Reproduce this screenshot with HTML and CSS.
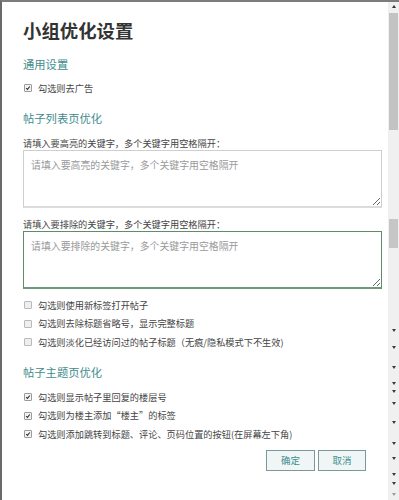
FILE: index.html
```html
<!DOCTYPE html>
<html lang="zh-CN">
<head>
<meta charset="utf-8">
<title>小组优化设置</title>
<link rel="stylesheet" href="styles.css">
</head>
<body>
<div class="frame">
  <div class="dialog">
    <h1 class="title">小组优化设置</h1>

    <h2 class="section s-general">通用设置</h2>
    <label class="check first-general"><span class="box on"><svg viewBox="0 0 8 8"><path d="M1.6 4.2 L3.3 5.9 L6.4 2" /></svg></span>勾选则去广告</label>

    <h2 class="section s-list">帖子列表页优化</h2>
    <div class="field-label fl1">请填入要高亮的关键字，多个关键字用空格隔开：</div>
    <textarea class="kw" placeholder="请填入要高亮的关键字，多个关键字用空格隔开"></textarea>
    <div class="field-label fl2">请填入要排除的关键字，多个关键字用空格隔开：</div>
    <textarea class="kw focus" placeholder="请填入要排除的关键字，多个关键字用空格隔开"></textarea>

    <div class="group g-list">
      <label class="check row"><span class="box"></span>勾选则使用新标签打开帖子</label>
      <label class="check row"><span class="box"></span>勾选则去除标题省略号，显示完整标题</label>
      <label class="check row"><span class="box"></span>勾选则淡化已经访问过的帖子标题（无痕/隐私模式下不生效)</label>
    </div>

    <h2 class="section s-topic">帖子主题页优化</h2>
    <div class="group g-topic">
      <label class="check row"><span class="box on"><svg viewBox="0 0 8 8"><path d="M1.6 4.2 L3.3 5.9 L6.4 2" /></svg></span>勾选则显示帖子里回复的楼层号</label>
      <label class="check row"><span class="box on"><svg viewBox="0 0 8 8"><path d="M1.6 4.2 L3.3 5.9 L6.4 2" /></svg></span>勾选则为楼主添加“楼主”的标签</label>
      <label class="check row"><span class="box on"><svg viewBox="0 0 8 8"><path d="M1.6 4.2 L3.3 5.9 L6.4 2" /></svg></span>勾选则添加跳转到标题、评论、页码位置的按钮(在屏幕左下角)</label>
    </div>

    <div class="actions">
      <button class="btn ok">确定</button>
      <button class="btn cancel">取消</button>
    </div>
  </div>

  <div class="scrollbar">
    <span class="up"></span>
    <span class="thumb t1"></span>
    <span class="thumb t2"></span>
    <span class="down"></span>
    <span class="down"></span>
    <span class="down"></span>
    <span class="down"></span>
    <span class="down"></span>
    <span class="down"></span>
    <span class="down"></span>
    <span class="down"></span>
    <span class="down"></span>
    <span class="down"></span>
    <span class="down"></span>
    <span class="down faint"></span>
  </div>
</div>
</body>
</html>
```

FILE: styles.css
```css
* { box-sizing: border-box; }

html, body {
  margin: 0;
  padding: 0;
  background: #ffffff;
}

body {
  font-family: "Noto Sans CJK SC", "Noto Sans", sans-serif;
  color: #444;
}

.frame {
  width: 399px;
  height: 500px;
  display: flex;
  border-top: 2px solid #7c7c7c;
  border-left: 2px solid #6a6a6a;
  overflow: hidden;
}

.dialog {
  width: 386px;
  flex: none;
  padding: 0 6px 0 21px;
  background: #fff;
}

.title {
  margin: 16px 0 0;
  font-size: 18.4px;
  line-height: 24px;
  font-weight: bold;
  color: #333;
  letter-spacing: 0;
}

.section {
  margin: 0;
  font-size: 11.3px;
  line-height: 16px;
  font-weight: normal;
  color: #3f8c8c;
}

.s-general { margin-top: 13.5px; }
.s-list { margin-top: 14.5px; }
.s-topic { margin-top: 12.75px; }

.check {
  display: flex;
  align-items: center;
  font-size: 9.2px;
  line-height: 14px;
  color: #444;
  white-space: nowrap;
}

.first-general { margin-top: 9.5px; }

.row { line-height: 18.5px; height: 18.5px; }

.g-list { margin-top: 6.75px; }
.g-topic { margin-top: 7.75px; }

.box {
  width: 8px;
  height: 8px;
  margin-left: 1px;
  margin-right: 6px;
  border: 1px solid #b9b9b9;
  background: #efefef;
  border-radius: 1px;
  flex: none;
  display: flex;
}

.box.on {
  border-color: #9a9a9a;
  background: #f4f4f4;
}

.box svg {
  width: 6px;
  height: 6px;
}

.box svg path {
  fill: none;
  stroke: #333;
  stroke-width: 1.5;
}

.field-label {
  font-size: 9.2px;
  line-height: 14px;
  color: #444;
  white-space: nowrap;
}

.fl1 { margin-top: 10px; }
.fl2 { margin-top: 9px; }

.kw {
  display: block;
  width: 359px;
  height: 58px;
  margin: 0.5px 0 0;
  padding: 7px 7px;
  border: 1px solid #cfcfcf;
  border-bottom: 2px solid #dcdcdc;
  border-radius: 0;
  background: #fff;
  font-family: "Noto Sans CJK SC", "Noto Sans", sans-serif;
  font-size: 9.9px;
  line-height: 14px;
  color: #444;
  outline: none;
  resize: both;
}

.kw.focus {
  margin-top: 0;
  border: 1px solid #5f8c6c;
  border-bottom: 2px solid #6f9a7b;
}

.kw::placeholder {
  color: #9a9a9a;
}

.actions {
  display: flex;
  justify-content: flex-end;
  gap: 3px;
  margin-top: 6.75px;
  padding-right: 16px;
}

.btn {
  height: 21px;
  padding: 0;
  border: 1px solid #7b9999;
  background: #f0f6f6;
  color: #3f8f8f;
  font-family: "Noto Sans CJK SC", "Noto Sans", sans-serif;
  font-size: 9.5px;
  line-height: 19px;
  border-radius: 0;
}

.ok { width: 49px; }
.cancel { width: 48px; }

.scrollbar {
  width: 11px;
  flex: none;
  background: #f0f0f0;
  display: flex;
  flex-direction: column;
  align-items: center;
}

.up {
  margin-top: 3px;
  width: 0;
  height: 0;
  border-left: 2.5px solid transparent;
  border-right: 2.5px solid transparent;
  border-bottom: 3px solid #333;
}

.thumb {
  width: 9px;
  background: #c3c3c3;
  flex: none;
}

.t1 { margin-top: 5px; height: 117px; }
.t2 { margin-top: 89px; height: 29px; background: #c6c6c6; }

.down {
  flex: none;
  width: 0;
  height: 0;
  border-left: 2.5px solid transparent;
  border-right: 2.5px solid transparent;
  border-top: 3px solid #3c3c3c;
}

.down.faint { border-top-color: #9c9c9c; }

.down:nth-child(4) { margin-top: 80.5px; }
.down:nth-child(5) { margin-top: 14px; }
.down:nth-child(6) { margin-top: 17px; }
.down:nth-child(7) { margin-top: 13px; }
.down:nth-child(8) { margin-top: 5px; }
.down:nth-child(9) { margin-top: 9px; }
.down:nth-child(10) { margin-top: 16px; }
.down:nth-child(11) { margin-top: 18px; }
.down:nth-child(12) { margin-top: 12px; }
.down:nth-child(13) { margin-top: 13px; }
.down:nth-child(14) { margin-top: 6px; }
.down:nth-child(15) { margin-top: 8px; }
```
